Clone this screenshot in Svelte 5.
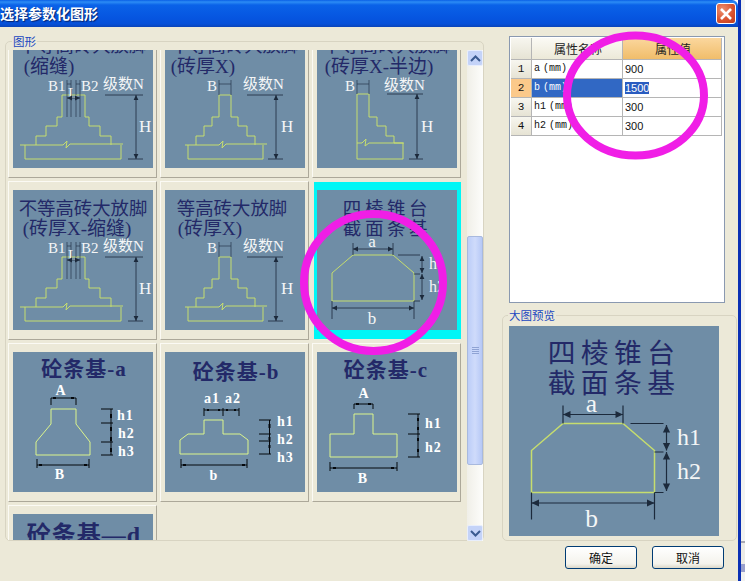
<script>
  const stairDouble = {
    outline: "M23 117V108H33V98H44V89H49V67H72V89H76V98H87V108H98V117",
    base: "M7 117H50L54 113L53 120L57 116H110M12 117V131H108V117",
    inner: "M54 67V89M58 67V89M63 67V89M67 67V89"
  };
  const stairSingle = {
    outline: "M31 117V108H39V98H47V89H54V67H66V89H73V98H82V108H90V117",
    base: "M20 117H54L58 113L57 120L61 116H102M23 117V131H98V117"
  };
</script>

{#snippet dimH(x1, x2, y)}
  <path class="dim" d="M{x1} {y}H{x2}" />
  <path class="head" d="M{x1} {y}l5 -2.4v4.8zM{x2} {y}l-5 -2.4v4.8z" />
{/snippet}
{#snippet dimV(x, y1, y2)}
  <path class="dim" d="M{x} {y1}V{y2}" />
  <path class="head" d="M{x} {y1}l-2.4 5h4.8zM{x} {y2}l-2.4 -5h4.8z" />
{/snippet}
{#snippet levelDim(x1, x2, ax, tx, labelX, hx)}
  <text class="lbl" x={labelX} y="61" font-size="15">级数N</text>
  <path class="dim" d="M{x1} 67H{x2}M{tx} 131H{x2}" />
  {@render dimV(ax, 67, 131)}
  <text class="lbl" x={hx} y="104" font-size="17">H</text>
{/snippet}
{#snippet doubleBody()}
  <path class="shape" d={stairDouble.outline} />
  <path class="shape" d={stairDouble.base} />
  <path class="thin" d={stairDouble.inner} />
  <path class="thin" d="M54 52V67M58 52V67M63 52V67M67 52V67M54 56H58M63 56H67" />
  <text class="lbl" x="35" y="63" font-size="15">B1</text>
  <text class="lbl" x="68" y="63" font-size="15">B2</text>
  <text class="lbl" x="55" y="70" font-size="15">L</text>
  {@render dimH(54, 67, 70)}
  {@render levelDim(92, 130, 123, 115, 90, 126)}
{/snippet}
{#snippet singleBody()}
  <path class="shape" d={stairSingle.outline} />
  <path class="shape" d={stairSingle.base} />
  <path class="thin" d="M54 52V67M66 52V67M54 56H66" />
  <text class="lbl" x="42" y="63" font-size="15">B</text>
  {@render levelDim(82, 118, 111, 103, 78, 116)}
{/snippet}
{#snippet halfBody()}
  <path class="shape" d="M40 131V66H52V89H60V98H69V108H77V115H86V131Z" />
  <path class="shape" d="M40 115H45L49 111L48 118L52 115H87" />
  <path class="thin" d="M40 52V66M52 52V66M40 56H52" />
  <text class="lbl" x="28" y="63" font-size="15">B</text>
  <text class="lbl" x="67" y="62" font-size="15">级数N</text>
  <path class="dim" d="M70 66H106M92 131H106" />
  {@render dimV(100, 66, 131)}
  <text class="lbl" x="104" y="104" font-size="17">H</text>
{/snippet}
{#snippet trapezoid()}
  <text class="ttl" x="70" y="24.5" font-size="18.5" letter-spacing="3.6">四棱锥台</text>
  <text class="ttl" x="70" y="44.5" font-size="18.5" letter-spacing="3.6">截面条基</text>
  <path class="shape" d="M36 65H76L97 83V111H15V83Z" />
  <path class="dim" d="M36 53V65M76 53V65M15 111V129M97 111V129M81 65H103M97 84H103M97 111H103" />
  {@render dimH(36, 76, 59)}
  {@render dimH(15, 97, 118)}
  {@render dimV(105, 66, 83)}
  {@render dimV(105, 84, 110)}
  <text class="lbl mid" x="55" y="57" font-size="17">a</text>
  <text class="lbl mid" x="55" y="134" font-size="17">b</text>
  <text class="lbl" x="112" y="79" font-size="16">h1</text>
  <text class="lbl" x="112" y="102" font-size="16">h2</text>
{/snippet}
{#snippet hMark(x, y, t)}
  <text class="bold" {x} {y}>{t}</text>
{/snippet}
{#snippet concreteA()}
  <text class="ttl strong" x="71" y="24" font-size="21" letter-spacing="1">砼条基-a</text>
  <path class="shape bright" d="M38 57H63V72L77 90V103H23V90L38 72Z" />
  <path class="blk" d="M38 53V46H63V53M24 107V116M76 107V116M24 113H76M88 57H100M88 71H100M88 90H100M88 103H100M98 57V103" />
  <path class="mk" d="M26 112h3v2h-3zM71 112h3v2h-3zM40 45h3v2h-3zM58 45h3v2h-3zM97 62h2v4h-2zM97 75h2v4h-2zM97 85h2v4h-2zM97 96h2v4h-2z" />
  <text class="bold mid" x="48" y="43">A</text>
  <text class="bold mid" x="47" y="127">B</text>
  {@render hMark(104, 68, "h1")}
  {@render hMark(105, 86, "h2")}
  {@render hMark(105, 104, "h3")}
{/snippet}
{#snippet concreteB()}
  <text class="ttl strong" x="71" y="27" font-size="21" letter-spacing="1">砼条基-b</text>
  <path class="shape bright" d="M39 68H58V82H75L83 88V102H15V88L23 82H39Z" />
  <path class="blk" d="M39 56V64M58 56V64M74 56V64M39 58H74M16 107V116M82 107V116M16 113H82M94 68H106M94 82H106M94 89H106M94 102H106M104.5 68V102" />
  <path class="mk" d="M18 112h3v2h-3zM77 112h3v2h-3zM42 57h2v2h-2zM53 57h2v2h-2zM61 57h2v2h-2zM69 57h2v2h-2zM103.5 72h2v4h-2zM103.5 85h2v3h-2zM103.5 93h2v3h-2z" />
  <text class="bold" x="39" y="51">a1</text>
  <text class="bold" x="60" y="51">a2</text>
  <text class="bold mid" x="49" y="128">b</text>
  {@render hMark(112, 74, "h1")}
  {@render hMark(112, 92, "h2")}
  {@render hMark(112, 110, "h3")}
{/snippet}
{#snippet concreteC()}
  <text class="ttl strong" x="69" y="25" font-size="21" letter-spacing="1">砼条基-c</text>
  <path class="shape bright" d="M37 62H56V82H80V105H13V82H37Z" />
  <path class="blk" d="M37 57V52H56V57M13 110V119M80 110V119M13 116H80M91 62H103M91 82H103M91 105H103M101 62V105" />
  <path class="mk" d="M16 115h3v2h-3zM74 115h3v2h-3zM39 51h3v2h-3zM51 51h3v2h-3zM100 66h2v3h-2zM100 75h2v3h-2zM100 86h2v3h-2zM100 97h2v3h-2z" />
  <text class="bold mid" x="47" y="46">A</text>
  <text class="bold mid" x="46" y="131">B</text>
  {@render hMark(108, 76, "h1")}
  {@render hMark(108, 100, "h2")}
{/snippet}

<div class="window">
  <div class="dialog">
    <header class="titlebar">
      <span class="caption">选择参数化图形</span>
      <div class="close" aria-label="关闭">
        <svg width="14" height="14" viewBox="0 0 14 14"><path d="M2 2L12 12M12 2L2 12" stroke="#fff" stroke-width="2.6" /></svg>
      </div>
    </header>

    <div class="client">
      <div class="top">
        <fieldset class="group shapes">
          <legend>图形</legend>
          <div class="viewport">
            <div class="grid">
              <div class="card"><svg viewBox="0 0 140 140" class="thumb">
                <text class="ttl" x="70" y="24" font-size="18.4">不等高砖大放脚</text>
                <text class="ttl" x="36" y="45" font-size="19">(缩缝)</text>
                {@render doubleBody()}
              </svg></div>
              <div class="card"><svg viewBox="0 0 140 140" class="thumb">
                <text class="ttl" x="70" y="24" font-size="18.4">不等高砖大放脚</text>
                <text class="ttl" x="38" y="45" font-size="19">(砖厚X)</text>
                {@render singleBody()}
              </svg></div>
              <div class="card"><svg viewBox="0 0 140 140" class="thumb">
                <text class="ttl" x="70" y="24" font-size="18.4">不等高砖大放脚</text>
                <text class="ttl" x="62" y="45" font-size="19">(砖厚X-半边)</text>
                {@render halfBody()}
              </svg></div>

              <div class="card"><svg viewBox="0 0 140 140" class="thumb">
                <text class="ttl" x="70" y="24.5" font-size="18.4">不等高砖大放脚</text>
                <text class="ttl" x="64" y="44.5" font-size="19">(砖厚X-缩缝)</text>
                {@render doubleBody()}
              </svg></div>
              <div class="card"><svg viewBox="0 0 140 140" class="thumb">
                <text class="ttl" x="67" y="24.5" font-size="18.4">等高砖大放脚</text>
                <text class="ttl" x="45" y="44.5" font-size="19">(砖厚X)</text>
                {@render singleBody()}
              </svg></div>
              <div class="card selected"><svg viewBox="0 0 140 140" class="thumb">
                {@render trapezoid()}
              </svg></div>

              <div class="card"><svg viewBox="0 0 140 140" class="thumb">{@render concreteA()}</svg></div>
              <div class="card"><svg viewBox="0 0 140 140" class="thumb">{@render concreteB()}</svg></div>
              <div class="card"><svg viewBox="0 0 140 140" class="thumb">{@render concreteC()}</svg></div>

              <div class="card"><svg viewBox="0 0 140 140" class="thumb">
                <text class="ttl strong" x="71" y="29" font-size="24" letter-spacing="1">砼条基—d</text>
              </svg></div>
            </div>
          </div>
          <div class="scrollbar">
            <div class="sb-btn"><svg width="11" height="7" viewBox="0 0 11 7"><path d="M1 6L5.5 1.5L10 6" fill="none" stroke="#3a5a90" stroke-width="2" /></svg></div>
            <div class="sb-track">
              <div class="sb-thumb"><span></span><span></span><span></span><span></span></div>
            </div>
            <div class="sb-btn"><svg width="11" height="7" viewBox="0 0 11 7"><path d="M1 1L5.5 5.5L10 1" fill="none" stroke="#3a5a90" stroke-width="2" /></svg></div>
          </div>
        </fieldset>

        <div class="side">
          <div class="props">
            <div class="prop-table">
              <div class="cell corner"></div>
              <div class="cell head-cell">属性名称</div>
              <div class="cell head-cell active">属性值</div>

              <div class="cell num">1</div>
              <div class="cell name">a (mm)</div>
              <div class="cell val">900</div>

              <div class="cell num on">2</div>
              <div class="cell name sel">b (mm)</div>
              <div class="cell val"><span class="mark">1500</span></div>

              <div class="cell num">3</div>
              <div class="cell name">h1 (mm)</div>
              <div class="cell val">300</div>

              <div class="cell num">4</div>
              <div class="cell name">h2 (mm)</div>
              <div class="cell val">300</div>
            </div>
          </div>

          <fieldset class="group preview">
            <legend>大图预览</legend>
            <svg viewBox="0 0 140 140" class="big">{@render trapezoid()}</svg>
          </fieldset>
        </div>
      </div>

      <div class="actions">
        <button>确定</button>
        <button>取消</button>
      </div>
    </div>
  </div>
  <div class="behind"></div>

  <svg class="ink" width="745" height="581" viewBox="0 0 745 581">
    <ellipse cx="635.5" cy="95.5" rx="68.5" ry="60" />
    <ellipse cx="373.5" cy="282.5" rx="69.5" ry="68.5" />
  </svg>
</div>

<style>
  :global(body) { margin: 0; background: #fff; }
  .window {
    position: relative;
    width: 745px;
    height: 581px;
    overflow: hidden;
    display: flex;
    font-family: "Noto Sans CJK SC", "Liberation Sans", sans-serif;
  }
  .dialog {
    width: 741px;
    height: 581px;
    display: flex;
    flex-direction: column;
    box-sizing: border-box;
    border-right: 3px solid #0a2fb4;
  }
  .behind {
    width: 4px;
    background: linear-gradient(#f3f3f0 0 541px, #a9a9b4 541px 543px, #ecebe6 543px 564px, #9aa0cc 564px 572px, #f3f3f0 572px);
  }
  .titlebar {
    height: 27px;
    flex: none;
    display: flex;
    align-items: center;
    justify-content: space-between;
    padding-right: 2px;
    background: linear-gradient(#0a5fe6 0, #2c8cf5 2px, #0a62e8 5px, #0655e0 18px, #0650d8 24px, #0a44b8 27px);
    border-top-right-radius: 6px;
  }
  .caption {
    color: #fff;
    font-size: 14px;
    font-weight: 700;
    line-height: 27px;
    text-shadow: 1px 1px 1px #06246e;
  }
  .close {
    width: 20px;
    height: 21px;
    border: 1px solid #fff;
    box-sizing: border-box;
    border-radius: 3px;
    background: radial-gradient(circle at 30% 30%, #ec9070, #d8502c 60%, #bb3a1c);
    display: flex;
    align-items: center;
    justify-content: center;
  }
  .client {
    flex: 1;
    background: #ece9d8;
    display: flex;
    flex-direction: column;
    padding: 9px 0 6px 5px;
    min-height: 0;
  }
  .top {
    flex: 1;
    display: flex;
    gap: 18px;
    min-height: 0;
  }
  fieldset.group {
    margin: 0;
    border: 1px solid #d8d4c2;
    border-radius: 5px;
    box-sizing: border-box;
    min-width: 0;
  }
  legend {
    color: #1a47c0;
    font-size: 11.5px;
    line-height: 14px;
    padding: 0 1px;
    margin-left: 4px;
  }
  fieldset.shapes {
    width: 479px;
    height: 507px;
    margin-top: -2px;
    padding: 2px 0 0 2px;
    display: flex;
    position: relative;
  }
  .viewport {
    width: 458px;
    height: 490px;
    overflow: hidden;
  }
  .grid {
    display: grid;
    grid-template-columns: repeat(3, 149px);
    grid-auto-rows: 159px;
    column-gap: 3px;
    row-gap: 3px;
    margin-top: -31px;
  }
  .card {
    box-sizing: border-box;
    border: 1px solid;
    border-color: #fbfaf4 #aca899 #aca899 #fbfaf4;
    padding: 8px 3px 0 4px;
  }
  .card.selected {
    background: #00f6f6;
    border-color: #00f6f6;
    margin: 1px 0 1px 2px;
    padding: 7px 3px 0 2px;
  }
  .thumb {
    width: 140px;
    height: 140px;
    display: block;
    background: #6f8da6;
  }
  .big {
    width: 210px;
    height: 210px;
    display: block;
    background: #6f8da6;
  }
  .shape { fill: none; stroke: #c6dd6e; stroke-width: 1; }
  .shape.bright { stroke: #dcf58c; }
  .thin { fill: none; stroke: #26364c; stroke-width: .7; }
  .dim { fill: none; stroke: #1c2a3c; stroke-width: .8; }
  .head { fill: #1c2a3c; }
  .blk { fill: none; stroke: #05080c; stroke-width: 1; }
  .mk { fill: #05080c; }
  .ttl {
    fill: #232968;
    text-anchor: middle;
    font-family: "Liberation Serif", "Noto Sans CJK SC", serif;
    font-weight: 400;
  }
  .ttl.strong { font-weight: 700; }
  .lbl {
    fill: #f4f6f6;
    font-family: "Liberation Serif", "Noto Sans CJK SC", serif;
  }
  .bold {
    fill: #fff;
    font-family: "Liberation Serif", serif;
    font-size: 14px;
    font-weight: 700;
    letter-spacing: 1px;
  }
  .mid { text-anchor: middle; }
  .scrollbar {
    width: 16px;
    height: 491px;
    margin-left: 1px;
    display: flex;
    flex-direction: column;
    background: linear-gradient(90deg, #f0efe8, #fdfdfb);
  }
  .sb-btn {
    height: 16px;
    flex: none;
    background: #c4d3f8;
    border: 1px solid #e8eefc;
    box-sizing: border-box;
    border-radius: 2px;
    display: flex;
    align-items: center;
    justify-content: center;
  }
  .sb-track {
    flex: 1;
    padding-top: 170px;
    padding-bottom: 60px;
    display: flex;
  }
  .sb-thumb {
    flex: 1;
    background: linear-gradient(90deg, #bccdf8, #cfdbfb 50%, #b6c8f6);
    border: 1px solid #a8b9de;
    border-radius: 2px;
    display: flex;
    flex-direction: column;
    align-items: center;
    justify-content: center;
    gap: 1px;
  }
  .sb-thumb span { width: 7px; height: 1px; background: #8fa3d4; }
  .side {
    width: 235px;
    display: flex;
    flex-direction: column;
  }
  .props {
    width: 216px;
    height: 267px;
    margin-left: 7px;
    box-sizing: border-box;
    background: #fff;
    border: 1px solid #8a99b0;
    padding: 1px;
    flex: none;
  }
  .prop-table {
    display: grid;
    grid-template-columns: 21px 91px 99px;
    grid-template-rows: 22px repeat(4, 19px);
  }
  .cell {
    box-sizing: border-box;
    border-right: 1px solid #b5b5b5;
    border-bottom: 1px solid #b5b5b5;
    font-size: 11px;
    line-height: 18px;
    color: #111;
    padding-left: 2px;
    white-space: nowrap;
    overflow: hidden;
  }
  .cell.corner, .cell.num {
    background: linear-gradient(#f7f6ef, #e6e3d4);
    text-align: center;
    padding: 0;
    font-family: "Liberation Mono", monospace;
  }
  .cell.num.on { background: #fbc98a; }
  .head-cell {
    background: linear-gradient(#fbfaf5, #ece9d8);
    font-size: 12px;
    line-height: 21px;
    text-align: center;
    color: #222;
  }
  .head-cell.active { background: linear-gradient(#fbd79e, #f0bd6a); }
  .name { font-family: "Liberation Mono", monospace; font-size: 10px; word-spacing: -3px; }
  .name.sel { background: #3168c4; color: #fff; }
  .val { font-family: "Liberation Sans", sans-serif; padding-left: 2px; }
  .mark { background: #2a5cc0; color: #fff; }
  fieldset.preview {
    width: 235px;
    height: 233px;
    margin-top: 5px;
    padding: 4px 0 0 6px;
  }
  .preview legend { margin-left: -1px; }
  .actions {
    height: 34px;
    flex: none;
    display: flex;
    justify-content: flex-end;
    gap: 15px;
    padding: 5px 14px 0 0;
    box-sizing: border-box;
  }
  button {
    width: 72px;
    height: 23px;
    padding: 0;
    border: 1px solid #003c74;
    border-radius: 3px;
    background: linear-gradient(#fff, #f4f3ec 80%, #dcd8c8);
    font-family: inherit;
    font-size: 12px;
    color: #111;
  }
  .ink {
    position: absolute;
    left: 0;
    top: 0;
    pointer-events: none;
  }
  .ink ellipse { fill: none; stroke: #f01ee6; stroke-width: 8; }
</style>
